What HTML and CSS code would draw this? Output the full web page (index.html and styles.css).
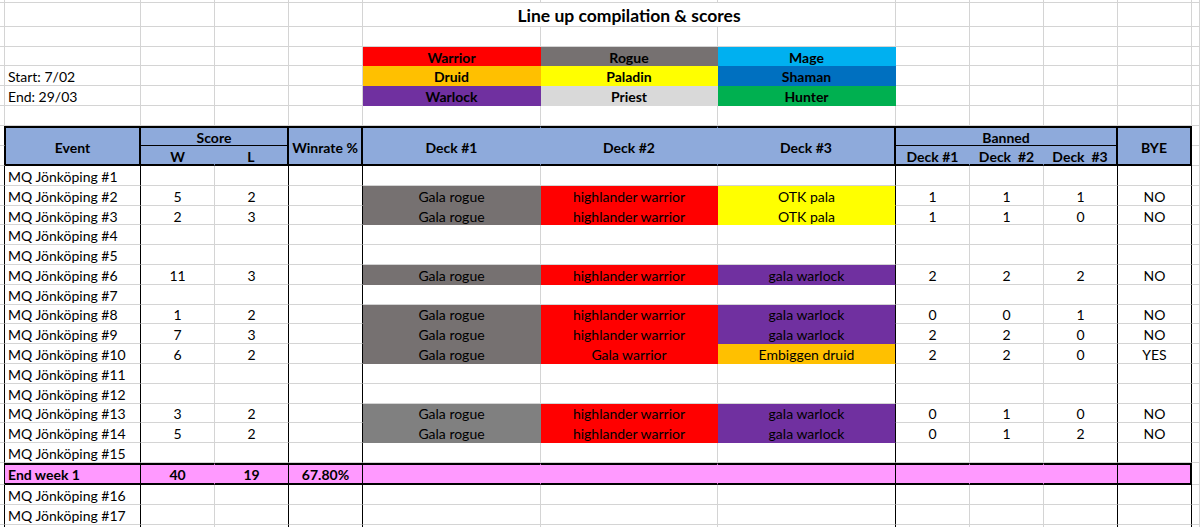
FILE: index.html
```html
<!DOCTYPE html>
<html lang="sv">
<head>
<meta charset="utf-8">
<title>Line up compilation &amp; scores</title>
<link rel="stylesheet" href="styles.css">
</head>
<body>
<div class="sheet">
<!-- row 0 (partial) -->
<span></span><span></span><span></span><span></span><span></span><span></span><span></span><span></span><span></span><span></span><span></span><span></span><span></span>
<!-- title -->
<span></span><span></span><span></span><span></span><span></span><span class="title">Line up compilation &amp; scores</span><span></span><span></span><span></span><span></span><span></span>
<!-- blank -->
<span></span><span></span><span></span><span></span><span></span><span></span><span></span><span></span><span></span><span></span><span></span><span></span><span></span>
<!-- legend 1 -->
<span></span><span></span><span></span><span></span><span></span><span class="lg war">Warrior</span><span class="lg rog">Rogue</span><span class="lg mag">Mage</span><span></span><span></span><span></span><span></span><span></span>
<!-- legend 2 -->
<span></span><span class="l">Start: 7/02</span><span></span><span></span><span></span><span class="lg dru">Druid</span><span class="lg pal">Paladin</span><span class="lg sha">Shaman</span><span></span><span></span><span></span><span></span><span></span>
<!-- legend 3 -->
<span></span><span class="l">End: 29/03</span><span></span><span></span><span></span><span class="lg wlk">Warlock</span><span class="lg pri">Priest</span><span class="lg hun">Hunter</span><span></span><span></span><span></span><span></span><span></span>
<!-- blank -->
<span></span><span></span><span></span><span></span><span></span><span></span><span></span><span></span><span></span><span></span><span></span><span></span><span></span>
<!-- header row 1 -->
<span class="k"></span><span class="hd t rs hb2 k2 lb">Event</span><span class="hd t cs2 hb1 k2">Score</span><span class="hd t rs hb2 k2">Winrate %</span><span class="hd t rs hb2">Deck #1</span><span class="hd t rs hb2">Deck #2</span><span class="hd t rs hb2 k2">Deck #3</span><span class="hd t cs3 hb1 k2">Banned</span><span class="hd t rs hb2 k2">BYE</span><span></span>
<!-- header row 2 -->
<span class="k"></span><span class="hd hb2">W</span><span class="hd hb2 k2">L</span><span class="hd hb2">Deck #1</span><span class="hd hb2">Deck  #2</span><span class="hd hb2 k2">Deck  #3</span><span></span>
<!-- #1 -->
<span class="k"></span><span class="l k">MQ Jönköping #1</span><span></span><span class="k"></span><span class="k"></span><span></span><span></span><span class="k"></span><span></span><span></span><span class="k"></span><span class="k"></span><span></span>
<!-- #2 -->
<span class="k"></span><span class="l k">MQ Jönköping #2</span><span>5</span><span class="k">2</span><span class="k"></span><span class="rog">Gala rogue</span><span class="war">highlander warrior</span><span class="pal k">OTK pala</span><span>1</span><span>1</span><span class="k">1</span><span class="k">NO</span><span></span>
<!-- #3 -->
<span class="k"></span><span class="l k">MQ Jönköping #3</span><span>2</span><span class="k">3</span><span class="k"></span><span class="rog">Gala rogue</span><span class="war">highlander warrior</span><span class="pal k">OTK pala</span><span>1</span><span>1</span><span class="k">0</span><span class="k">NO</span><span></span>
<!-- #4 -->
<span class="k"></span><span class="l k">MQ Jönköping #4</span><span></span><span class="k"></span><span class="k"></span><span></span><span></span><span class="k"></span><span></span><span></span><span class="k"></span><span class="k"></span><span></span>
<!-- #5 -->
<span class="k"></span><span class="l k">MQ Jönköping #5</span><span></span><span class="k"></span><span class="k"></span><span></span><span></span><span class="k"></span><span></span><span></span><span class="k"></span><span class="k"></span><span></span>
<!-- #6 -->
<span class="k"></span><span class="l k">MQ Jönköping #6</span><span>11</span><span class="k">3</span><span class="k"></span><span class="rog">Gala rogue</span><span class="war">highlander warrior</span><span class="wlk k">gala warlock</span><span>2</span><span>2</span><span class="k">2</span><span class="k">NO</span><span></span>
<!-- #7 -->
<span class="k"></span><span class="l k">MQ Jönköping #7</span><span></span><span class="k"></span><span class="k"></span><span></span><span></span><span class="k"></span><span></span><span></span><span class="k"></span><span class="k"></span><span></span>
<!-- #8 -->
<span class="k"></span><span class="l k">MQ Jönköping #8</span><span>1</span><span class="k">2</span><span class="k"></span><span class="rog">Gala rogue</span><span class="war">highlander warrior</span><span class="wlk k">gala warlock</span><span>0</span><span>0</span><span class="k">1</span><span class="k">NO</span><span></span>
<!-- #9 -->
<span class="k"></span><span class="l k">MQ Jönköping #9</span><span>7</span><span class="k">3</span><span class="k"></span><span class="rog">Gala rogue</span><span class="war">highlander warrior</span><span class="wlk k">gala warlock</span><span>2</span><span>2</span><span class="k">0</span><span class="k">NO</span><span></span>
<!-- #10 -->
<span class="k"></span><span class="l k">MQ Jönköping #10</span><span>6</span><span class="k">2</span><span class="k"></span><span class="rog">Gala rogue</span><span class="war">Gala warrior</span><span class="dru k">Embiggen druid</span><span>2</span><span>2</span><span class="k">0</span><span class="k">YES</span><span></span>
<!-- #11 -->
<span class="k"></span><span class="l k">MQ Jönköping #11</span><span></span><span class="k"></span><span class="k"></span><span></span><span></span><span class="k"></span><span></span><span></span><span class="k"></span><span class="k"></span><span></span>
<!-- #12 -->
<span class="k"></span><span class="l k">MQ Jönköping #12</span><span></span><span class="k"></span><span class="k"></span><span></span><span></span><span class="k"></span><span></span><span></span><span class="k"></span><span class="k"></span><span></span>
<!-- #13 -->
<span class="k"></span><span class="l k">MQ Jönköping #13</span><span>3</span><span class="k">2</span><span class="k"></span><span class="gry">Gala rogue</span><span class="war">highlander warrior</span><span class="wlk k">gala warlock</span><span>0</span><span>1</span><span class="k">0</span><span class="k">NO</span><span></span>
<!-- #14 -->
<span class="k"></span><span class="l k">MQ Jönköping #14</span><span>5</span><span class="k">2</span><span class="k"></span><span class="gry">Gala rogue</span><span class="war">highlander warrior</span><span class="wlk k">gala warlock</span><span>0</span><span>1</span><span class="k">2</span><span class="k">NO</span><span></span>
<!-- #15 -->
<span class="k"></span><span class="l k">MQ Jönköping #15</span><span></span><span class="k"></span><span class="k"></span><span></span><span></span><span class="k"></span><span></span><span></span><span class="k"></span><span class="k"></span><span></span>
<!-- End week 1 -->
<span class="k"></span><span class="pk l b k">End week 1</span><span class="pk b">40</span><span class="pk b k">19</span><span class="pk b k">67.80%</span><span class="pk"></span><span class="pk"></span><span class="pk k"></span><span class="pk"></span><span class="pk"></span><span class="pk k"></span><span class="pk k2"></span><span></span>
<!-- #16 -->
<span class="k"></span><span class="l k">MQ Jönköping #16</span><span></span><span class="k"></span><span class="k"></span><span></span><span></span><span class="k"></span><span></span><span></span><span class="k"></span><span class="k"></span><span></span>
<!-- #17 -->
<span class="k"></span><span class="l k">MQ Jönköping #17</span><span></span><span class="k"></span><span class="k"></span><span></span><span></span><span class="k"></span><span></span><span></span><span class="k"></span><span class="k"></span><span></span>
<!-- #18 (cut off) -->
<span class="k"></span><span class="l k"></span><span></span><span class="k"></span><span class="k"></span><span></span><span></span><span class="k"></span><span></span><span></span><span class="k"></span><span class="k"></span><span></span>
</div>
</body>
</html>
```

FILE: styles.css
```css
html, body {
  margin: 0;
  padding: 0;
  background: #ffffff;
  overflow: hidden;
}

body {
  font-family: Lato, "Liberation Sans", Arial, sans-serif;
  font-size: 14px;
  color: #000000;
}

.sheet {
  display: grid;
  grid-template-columns: 5px 136px 74px 74px 74px 178px 177px 178px 74px 74px 74px 74px 8px;
  grid-template-rows: 3px 24px 20px 19px 20px 20px 20px 20px 20px repeat(15, 19.8px) 22px 20px 20px 20px;
  width: 1200px;
}

.sheet > * {
  box-sizing: border-box;
  min-width: 0;
  overflow: hidden;
  display: flex;
  align-items: center;
  justify-content: center;
  white-space: pre;
  padding-top: 2px;
  border-right: 1px solid #d4d4d4;
  border-bottom: 1px solid #d4d4d4;
}

.l {
  justify-content: flex-start;
  padding-left: 3px;
}

.title {
  grid-column: span 3;
  font-weight: bold;
  font-size: 17.5px;
}

.lg {
  font-weight: bold;
}

/* class colours */
.war { background: #ff0000; border-color: #ff0000; }
.rog { background: #767171; border-color: #767171; }
.gry { background: #808080; border-color: #808080; }
.mag { background: #00b0f0; border-color: #00b0f0; }
.dru { background: #ffc000; border-color: #ffc000; }
.pal { background: #ffff00; border-color: #ffff00; }
.sha { background: #0070c0; border-color: #0070c0; }
.wlk { background: #7030a0; border-color: #7030a0; }
.pri { background: #d9d9d9; border-color: #d9d9d9; }
.hun { background: #00b050; border-color: #00b050; }

/* table header */
.hd {
  background: #8eaadb;
  border-color: #8eaadb;
  font-weight: bold;
}
.rs { grid-row: span 2; }
.cs2 { grid-column: span 2; }
.cs3 { grid-column: span 3; }
.t { border-top: 2px solid #000000; }
.hb1 { border-bottom: 1px solid #000000; }
.hb2 { border-bottom: 2px solid #000000; }
.lb { border-left: 1px solid #000000; }

/* summary row */
.pk {
  background: #ff99ff;
  border-color: #ff99ff;
  border-top: 2px solid #000000;
  border-bottom: 2px solid #000000;
}
.b { font-weight: bold; }

/* black vertical rules */
.k { border-right-color: #000000; }
.k2 { border-right: 2px solid #000000; }
```
